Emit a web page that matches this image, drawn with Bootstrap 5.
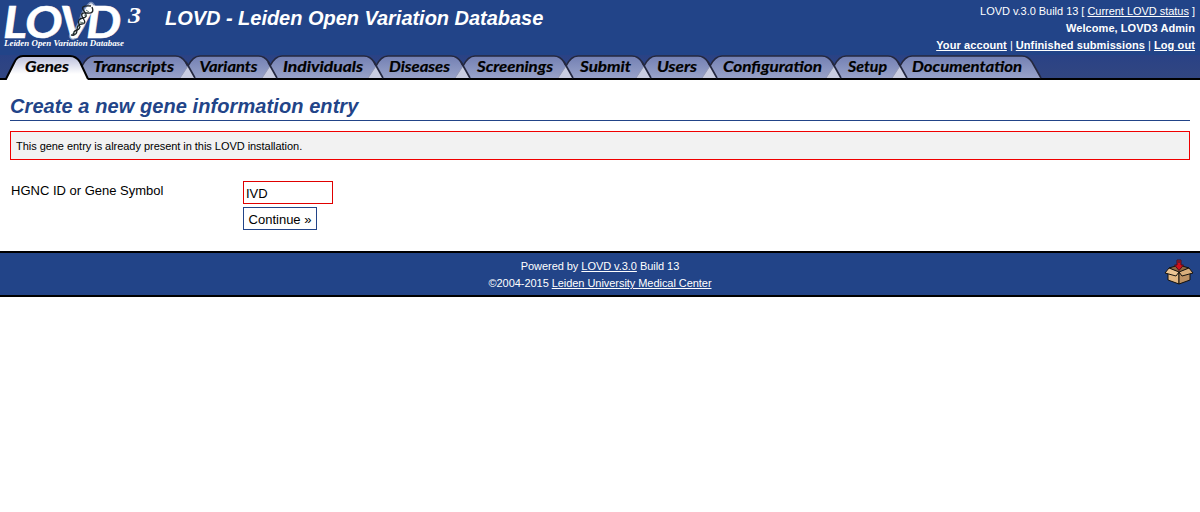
<!DOCTYPE html>
<html lang="en">
<head>
<meta charset="utf-8">
<meta name="viewport" content="width=device-width, initial-scale=1">
<title>LOVD - Leiden Open Variation Database</title>
<link href="https://cdn.jsdelivr.net/npm/bootstrap@5.3.0/dist/css/bootstrap.min.css" rel="stylesheet">
<style>
body{font:11px/17px "Liberation Sans",Arial,sans-serif;color:#000;background:#fff}
a,a:hover{color:inherit}
svg{display:block}
.site-head{background:#224488;color:#fff;height:55px}
.site-title{font-size:20px;line-height:24px;font-weight:bold;font-style:italic;letter-spacing:-.03px;margin:6px 0 0 15px}
.account{padding:3px 5px 0 0;letter-spacing:-.03px}
.account .fw-bold{letter-spacing:.06px}
.account a.fw-bold{letter-spacing:.1px}
.tabs-bar{background:linear-gradient(#2a4285,#324681);height:25px;border-bottom:2px solid #000}
.tabs-bar svg{overflow:visible}
.tabs-bar text{font:italic 700 15px Lato,sans-serif;stroke:#000;stroke-width:.2}
.page-title{font-size:20px;line-height:24px;font-weight:bold;font-style:italic;letter-spacing:.08px;color:#224488;border-bottom:1px solid #224488;padding-bottom:2px;margin:0 0 10px}
.error-box{background:#f2f2f2;border:1px solid #f00000;height:29px;padding:6px 5px 0;line-height:16px;letter-spacing:-.04px}
.entry{font-size:13px;line-height:20px;margin-top:21px;height:70px}
.entry-label{width:233px;padding-left:1px}
.symbol{width:90px;height:23px;border:1px solid #e00000;border-radius:0;padding:2px 2px 0;font-size:13px;line-height:18px;color:#000}
.go{height:23px;width:74px;border:1px solid #224488;border-radius:0;background:#fff;padding:2px 0 0;font-size:13px;line-height:18px;color:#000}
.site-foot{background:#224488;color:#fff;border-top:2px solid #000;border-bottom:2px solid #000;height:46px;padding-top:5px;letter-spacing:-.05px}
.update{right:6px;top:6px}
.fields{gap:3px}
</style>
</head>
<body>
<header class="site-head d-flex">
  <svg width="150" height="55" viewBox="0 0 150 55" fill="#fff" role="img" aria-label="LOVD 3">
    <g font-family="Lato,sans-serif" font-style="italic" font-weight="700">
      <text transform="translate(3 38) scale(1.16 1)" x="0 19 49 71.500" y="0" font-size="43" stroke="#fff" stroke-width=".5">LOVD</text>
      <text x="128" y="22.500" font-family="Liberation Serif,serif" font-size="23" textLength="13" lengthAdjust="spacingAndGlyphs">3</text>
      <text x="4" y="46" font-size="8.300" font-family="Liberation Serif,serif" textLength="120" lengthAdjust="spacingAndGlyphs">Leiden Open Variation Database</text>
    </g>
    <path d="M73 36Q81 28 83 20T91 6" fill="none" stroke="#fff" stroke-width="8" stroke-linecap="round" opacity=".4"/>
    <path d="M73 36Q81 28 83 20T91 6" fill="none" stroke="#fff" stroke-width="5" stroke-linecap="round" opacity=".8"/>
    <g fill="none" stroke="#1c2226" stroke-width="1.3">
      <path d="M71 35Q77 36 77 30T82 24T83 18T87 13T92 7"/>
      <path d="M73 36Q73 31 77 30T79 24T83 18T84 11T91 6"/>
      <path d="M73 32l3 3M78 26l3 1M80 22l4 1M84 15l3 1M86 10l3 2" stroke="#526b62" stroke-width=".9"/>
    </g>
  </svg>
  <h1 class="site-title">LOVD - Leiden Open Variation Database</h1>
  <div class="account ms-auto text-end">
    <div>LOVD v.3.0 Build 13 [ <a href="#">Current LOVD status</a> ]</div>
    <div class="fw-bold">Welcome, LOVD3 Admin</div>
    <div><a class="fw-bold" href="#">Your account</a> | <a class="fw-bold" href="#">Unfinished submissions</a> | <a class="fw-bold" href="#">Log out</a></div>
  </div>
</header>
<nav class="tabs-bar d-flex" id="tabs"></nav>

<main class="px-2 mx-1 pt-3">
  <div style="margin:-2px -2px 0">
    <h2 class="page-title">Create a new gene information entry</h2>
    <div class="error-box">This gene entry is already present in this LOVD installation.</div>
    <form class="entry d-flex">
      <label class="entry-label" for="symbol">HGNC ID or Gene Symbol</label>
      <div class="fields d-flex flex-column align-items-start">
        <input class="symbol form-control" id="symbol" value="IVD">
        <button class="go btn" type="button">Continue »</button>
      </div>
    </form>
  </div>
</main>

<footer class="site-foot position-relative text-center">
  <div>Powered by <a href="#">LOVD v.3.0</a> Build 13</div>
  <div>©2004-2015 <a href="#">Leiden University Medical Center</a></div>
  <svg class="update position-absolute" width="30" height="27" viewBox="0 0 30 27" stroke="#15120e" stroke-width="1" stroke-linejoin="round">
    <path d="M5 9L15 6L25 9L15 14Z" fill="#8d6840"/>
    <path d="M4 12L15 14V25L4 21Z" fill="#e3b884"/>
    <path d="M26 12L15 14V25L26 21Z" fill="#bd9163"/>
    <path d="M5 9L15 13L12 17L1 14Z" fill="#ecc594"/>
    <path d="M25 9L15 13L18 17L29 14Z" fill="#d9ae7b"/>
    <path d="M13 1h4v5h2.500L15 11.500L10.500 6H13z" fill="#d0101c" stroke="#500c18"/>
    <path d="M13.500 1h3v3h-3z" fill="#731a2c" stroke="none"/>
  </svg>
</footer>

<script>
// label, tab width, text start within the tab, text length
const tabs = [
  ["Transcripts",105.5,11,81],["Variants",82.5,11.5,58],["Individuals",106,13,80],
  ["Diseases",87,13,61],["Screenings",103,14,76],["Submit",78,14,51],["Users",66,13,40],
  ["Configuration",124,13,99],["Setup",66,14,39],["Documentation",134,12,110]
];
const label = (t,x,w) => `<text x="${x}" y="17" textLength="${w}" lengthAdjust="spacingAndGlyphs">${t}</text>`;
let html = `<svg width="82" height="25" class="position-relative z-1"><defs>
<linearGradient id="on" x2="0" y2="1"><stop stop-color="#b9bedb"/><stop offset=".75" stop-color="#fff"/></linearGradient>
<linearGradient id="off" x2="0" y2="1"><stop stop-color="#7380b3"/><stop offset="1" stop-color="#98a2c9"/></linearGradient></defs>
<path d="M6 25L14 8Q17 1 23 1H70Q76 1 80 7L88 25Z" fill="url(#on)"/><path d="M0 24H6L14 8Q17 1 23 1H70Q76 1 80 7L88 24" fill="none" stroke="#000" stroke-width="2"/>${label("Genes",25,44)}</svg>`;
tabs.forEach(([t,w,x,len],i) => {
  const top = `M0 11Q5 1 12 1H${w-12}Q${w-6} 1 ${w-2} 7L${w+7} 23`;
  html += `<svg width="${w}" height="25"><path d="${top}H-7Z" fill="url(#off)"/>
<path d="${top}" fill="none" stroke="#24283f" stroke-width="1.6"/>
${i ? '<path d="M0 11L-8 23H6.500Z" fill="#c9cde1"/><path d="M0 11L-8 23" stroke="#9298b5"/><path d="M-2 7L7 23" stroke="#24283f" stroke-width="1.6"/>' : ''}${label(t,x,len)}</svg>`;
});
document.getElementById("tabs").innerHTML = html;
</script>
<script src="https://cdn.jsdelivr.net/npm/bootstrap@5.3.0/dist/js/bootstrap.bundle.min.js"></script>
</body>
</html>
